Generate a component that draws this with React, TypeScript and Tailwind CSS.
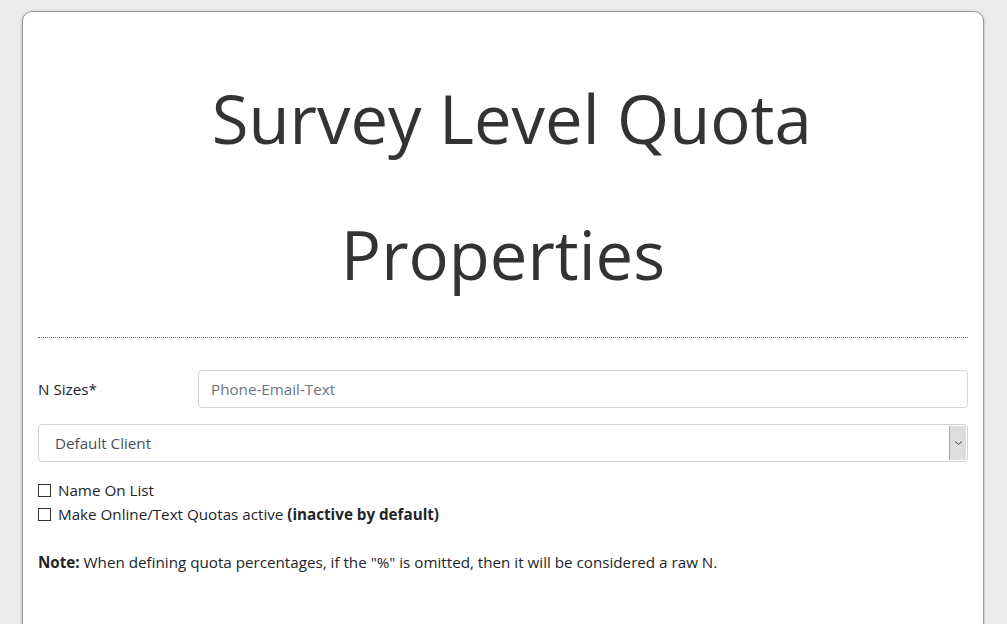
import React from "react"

function CheckRow({ children }: { children: React.ReactNode }) {
  return (
    <div className="flex items-center h-6">
      <span className="w-[13px] h-[13px] border border-[#333] bg-white shrink-0" />
      <span className="ml-[7px]">{children}</span>
    </div>
  )
}

export default function App() {
  return (
    <div className="min-h-[624px] bg-[#ececec] pt-[11px] pl-[22px] pr-[22px] overflow-hidden font-['Open_Sans',sans-serif] text-[15.2px] text-[#212529]">
      <div className="w-[962px] min-h-[640px] bg-white border border-[#9a9a9a] rounded-[10px] shadow-[0_1px_3px_rgba(0,0,0,0.3)] px-[15px] pt-[38px]">
        <h1 className="text-center text-[67px] leading-[136px] text-[#333] font-normal">
          {"\u00a0"}Survey Level Quota Properties
        </h1>

        <div className="mt-[15px] border-t border-dotted border-[#4a6fb0]" />

        <div className="mt-[32px] flex items-center">
          <label className="w-[160px] shrink-0">N Sizes*</label>
          <input
            type="text"
            placeholder="Phone-Email-Text"
            className="flex-1 h-[38px] rounded-[4px] border border-[#ced4da] px-3 text-[15.2px] placeholder:text-[#6c757d] outline-none"
          />
        </div>

        <div className="mt-4 h-[38px] rounded-[4px] border border-[#ced4da] flex items-stretch">
          <div className="flex-1 flex items-center pl-4 text-[#495057]">Default Client</div>
          <div className="w-[17px] my-[1px] mr-[1px] bg-[#dddddd] border-l border-[#a9a9a9] rounded-r-[2px] flex items-center justify-center">
            <svg width="9" height="6" viewBox="0 0 9 6" fill="none">
              <path d="M1 1.5 L4.5 4.5 L8 1.5" stroke="#444" strokeWidth="1" />
            </svg>
          </div>
        </div>

        <div className="mt-4">
          <CheckRow>Name On List</CheckRow>
          <CheckRow>
            Make Online/Text Quotas active <b className="font-bold">(inactive by default)</b>
          </CheckRow>
        </div>

        <p className="mt-6 leading-6">
          <b className="font-bold">Note:</b> When defining quota percentages, if the "%" is omitted, then it will be considered a raw N.
        </p>
      </div>
    </div>
  )
}
